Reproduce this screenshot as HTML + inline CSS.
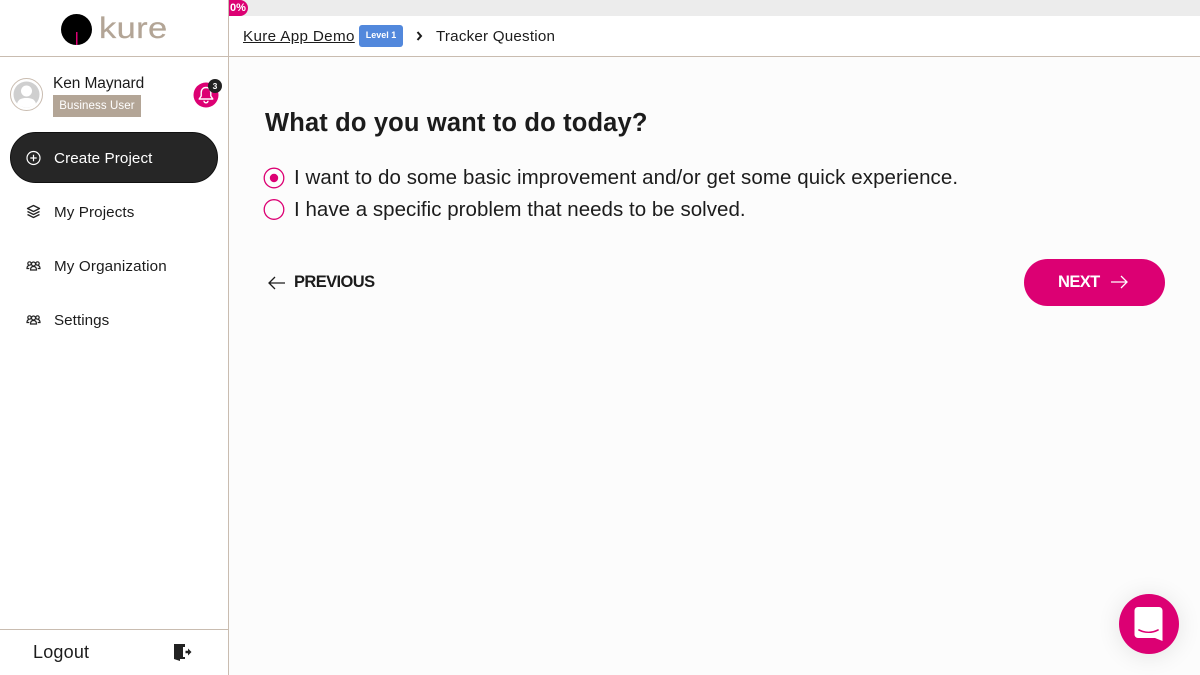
<!DOCTYPE html>
<html><head><meta charset="utf-8"><style>
html,body{margin:0;padding:0;width:1200px;height:675px;overflow:hidden;background:#fcfcfc;font-family:"Liberation Sans",sans-serif;color:#1c1c1c}
.a{position:absolute;white-space:nowrap}
svg{position:absolute;overflow:visible}
</style></head><body>
<div class="a" style="left:0;top:0;width:228px;height:675px;background:#fff"></div>
<div class="a" style="left:228px;top:0;width:1px;height:675px;background:#c9bcb0"></div>
<div class="a" style="left:229px;top:0;width:971px;height:16px;background:#ececec"></div>
<div class="a" style="left:229px;top:16px;width:971px;height:40px;background:#fff"></div>
<div class="a" style="left:0;top:56px;width:1200px;height:1px;background:#c9bcb0"></div>
<div class="a" style="left:0;top:629px;width:228px;height:1px;background:#c9bcb0"></div>

<!-- logo -->
<svg style="left:61px;top:14px" width="32" height="32"><circle cx="15.500" cy="15.500" r="15.500" fill="#000"/><rect x="15" y="18" width="1.500" height="13" fill="#dc0073"/></svg>
<div class="a" style="left:99px;top:11px;font-size:30px;line-height:36px;color:#b3a596;letter-spacing:.3px;-webkit-text-stroke:.2px #b3a596;transform:scaleX(1.15);transform-origin:0 0">kure</div>

<!-- profile -->
<svg style="left:10px;top:78px" width="33" height="33"><circle cx="16.500" cy="16.500" r="16" fill="#fff" stroke="#c9bcb0" stroke-width="1"/><circle cx="16.500" cy="16.500" r="13" fill="#cfcfcf"/><circle cx="16.500" cy="13" r="5.500" fill="#fff"/><path d="M7 26c1-5 5-6 9.500-6s8.500 1 9.500 6c-5 4.500-14 4.500-19 0z" fill="#fff"/></svg>
<div class="a" style="left:53px;top:75px;font-size:15.500px;line-height:18px;letter-spacing:-.1px">Ken Maynard</div>
<div class="a" style="left:53px;top:95px;width:88px;height:22px;background:#b3a596;color:#fff;font-size:11.500px;line-height:22px;text-align:center;letter-spacing:.1px">Business User</div>
<svg style="left:193px;top:78px" width="28" height="30"><circle cx="13" cy="17" r="12.500" fill="#dc0073"/><path d="M13 9.500c-3 0-4.800 2.200-4.800 5v3.500l-2 3h13.600l-2-3v-3.500c0-2.800-1.800-5-4.800-5zM11 22.800a2 2 0 0 0 4 0" fill="none" stroke="#fff" stroke-width="1.400" stroke-linejoin="round"/><circle cx="22" cy="8" r="7" fill="#222"/><text x="22" y="11" font-family="Liberation Sans" font-size="8.500" font-weight="700" fill="#fff" text-anchor="middle">3</text></svg>

<!-- nav -->
<div class="a" style="left:10px;top:132px;width:208px;height:51px;border-radius:26px;background:#262626;box-sizing:border-box;border:1px solid #111"></div>
<svg style="left:26px;top:150px" width="16" height="16" fill="none" stroke="#fff" stroke-width="1.200"><circle cx="7.500" cy="8" r="6.500"/><path d="M7.500 4.800v6.400M4.300 8h6.400"/></svg>
<div class="a" style="left:54px;top:150px;font-size:15.200px;line-height:18px;color:#fff;letter-spacing:.1px">Create Project</div>

<svg style="left:26px;top:204px" width="16" height="16" fill="none" stroke="#222" stroke-width="1.300" stroke-linejoin="round"><path d="M7.500 1.500l6 3-6 3-6-3zM1.500 7.500l6 3 6-3M1.500 10.500l6 3 6-3"/></svg>
<div class="a" style="left:54px;top:204px;font-size:15.200px;line-height:18px;letter-spacing:.1px">My Projects</div>

<svg style="left:26px;top:258px" width="16" height="16" fill="none" stroke="#222" stroke-width="1.200"><circle cx="7.500" cy="6" r="2"/><circle cx="3.500" cy="5.500" r="1.700"/><circle cx="11.500" cy="5.500" r="1.700"/><path d="M4.500 12c0-2.500 1.200-3.500 3-3.500s3 1 3 3.500zM3.300 10.500H1c0-2 .8-3 2.300-3M11.700 10.500H14c0-2-.8-3-2.300-3"/></svg>
<div class="a" style="left:54px;top:258px;font-size:15.200px;line-height:18px;letter-spacing:.15px">My Organization</div>

<svg style="left:26px;top:312px" width="16" height="16" fill="none" stroke="#222" stroke-width="1.200"><circle cx="7.500" cy="6" r="2"/><circle cx="3.500" cy="5.500" r="1.700"/><circle cx="11.500" cy="5.500" r="1.700"/><path d="M4.500 12c0-2.500 1.200-3.500 3-3.500s3 1 3 3.500zM3.300 10.500H1c0-2 .8-3 2.300-3M11.700 10.500H14c0-2-.8-3-2.300-3"/></svg>
<div class="a" style="left:54px;top:312px;font-size:15.200px;line-height:18px;letter-spacing:.05px">Settings</div>

<!-- logout -->
<div class="a" style="left:33px;top:642px;font-size:18px;line-height:20px;letter-spacing:.2px">Logout</div>
<svg style="left:174px;top:644px" width="18" height="18"><path d="M0 0h11v3H9v10h2v2H6v2l-6-2z" fill="#222"/><path d="M11.500 6.800h2.500V4.500l3.500 3.500L14 11.500V9.200h-2.500z" fill="#222"/></svg>

<!-- progress -->
<div class="a" style="left:229px;top:0;width:19px;height:16px;background:#dc0073;border-radius:0 8px 8px 0;color:#fff;font-size:11px;font-weight:700;line-height:16px;padding-left:1px;box-sizing:border-box">0%</div>

<!-- breadcrumb -->
<div class="a" style="left:243px;top:28px;font-size:15.200px;line-height:18px;text-decoration:underline;letter-spacing:.35px">Kure App Demo</div>
<div class="a" style="left:359px;top:25px;width:44px;height:22px;background:#5288dc;border-radius:3px;color:#fff;font-size:9px;font-weight:700;line-height:21px;text-align:center">Level 1</div>
<svg style="left:416px;top:31px" width="8" height="10" fill="none" stroke="#1c1c1c" stroke-width="2"><path d="M1.500 1l3.500 4-3.500 4"/></svg>
<div class="a" style="left:436px;top:28px;font-size:15.200px;line-height:18px;letter-spacing:.2px">Tracker Question</div>

<!-- question -->
<div class="a" style="left:265px;top:107px;font-size:25.500px;line-height:32px;font-weight:700;letter-spacing:.15px">What do you want to do today?</div>

<svg style="left:263px;top:167px" width="22" height="52" fill="none" stroke="#dc0073" stroke-width="1.300"><circle cx="11" cy="11" r="9.800"/><circle cx="11" cy="11" r="4.200" fill="#dc0073" stroke="none"/><circle cx="11" cy="42.500" r="9.800"/></svg>
<div class="a" style="left:294px;top:167px;font-size:20.500px;line-height:22px;letter-spacing:.08px">I want to do some basic improvement and/or get some quick experience.</div>
<div class="a" style="left:294px;top:199px;font-size:20.500px;line-height:22px;letter-spacing:.03px">I have a specific problem that needs to be solved.</div>

<!-- prev -->
<svg style="left:268px;top:276px" width="18" height="14" fill="none" stroke="#1c1c1c" stroke-width="1.300"><path d="M17 7H1M7 1L1 7l6 6"/></svg>
<div class="a" style="left:294px;top:272px;font-size:16.500px;line-height:21px;font-weight:700;letter-spacing:-.6px">PREVIOUS</div>

<!-- next -->
<div class="a" style="left:1024px;top:259px;width:141px;height:47px;border-radius:24px;background:#dc0073"></div>
<div class="a" style="left:1058px;top:272px;font-size:16.500px;line-height:21px;font-weight:700;color:#fff;letter-spacing:-.6px">NEXT</div>
<svg style="left:1110px;top:276px" width="18" height="14" fill="none" stroke="#fff" stroke-width="1.300"><path d="M1 6h16M11 0l6 6-6 6"/></svg>

<!-- chat -->
<div class="a" style="left:1119px;top:594px;width:60px;height:60px;border-radius:50%;background:#dc0073;box-shadow:0 2px 24px rgba(0,0,0,.10)"></div>
<svg style="left:1134px;top:607px" width="30" height="34"><path d="M4 0h21a3.500 3.500 0 0 1 3.500 3.500V34l-7.500-3H4a3.500 3.500 0 0 1-3.500-3.500v-24A3.500 3.500 0 0 1 4 0z" fill="#fff"/><path d="M5 23c6 3 13 3 19 0" fill="none" stroke="#dc0073" stroke-width="1.600" stroke-linecap="round"/></svg>
</body></html>
